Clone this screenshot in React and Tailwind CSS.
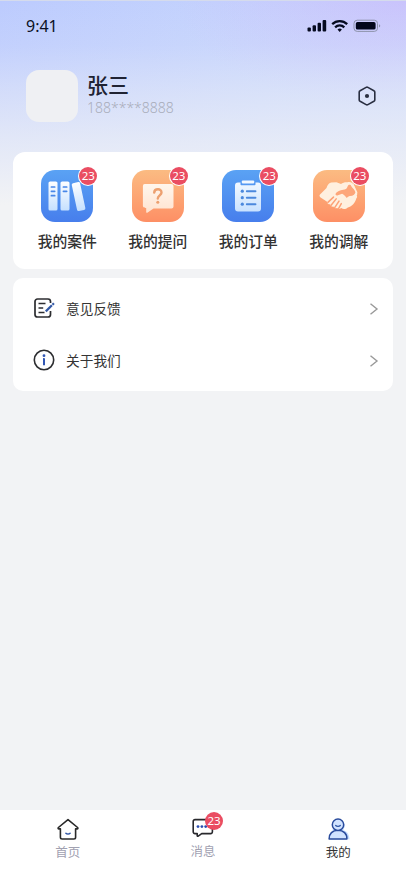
import React from 'react';

function Badge({ className }) {
  return (
    <span
      className={`absolute flex h-[18px] w-[18px] items-center justify-center rounded-full bg-[#ea4d62] pb-[1px] font-['Noto_Sans'] text-[11.5px] leading-none text-white ${className}`}
    >
      23
    </span>
  );
}

function StatusIcons() {
  return (
    <svg className="h-[14px] w-[74px]" viewBox="0 0 74 14" fill="none">
      <g fill="#060b20">
        <rect x="0.5" y="8.5" width="3.4" height="4" rx="1" />
        <rect x="5.6" y="6.3" width="3.4" height="6.2" rx="1" />
        <rect x="10.6" y="3.8" width="3.4" height="8.7" rx="1" />
        <rect x="15.6" y="1" width="3.6" height="11.5" rx="1" />
      </g>
      <g stroke="#060b20" strokeWidth="2.3">
        <path d="M25.2 5.2a10.8 10.8 0 0 1 15 0" />
        <path d="M28.1 8.3a6.7 6.7 0 0 1 9.2 0" />
      </g>
      <path d="M30.5 10.5a3.2 3.2 0 0 1 4.400 0l-2.200 2.400z" fill="#060b20" />
      <rect x="47" y="1.200" width="23.500" height="11.200" rx="3.200" stroke="#8d93ab" />
      <rect x="48.800" y="3" width="19.800" height="7.600" rx="1.700" fill="#03071a" />
      <path d="M72 5.200c1.700.6 1.700 2.600 0 3.200z" fill="#8d93ab" />
    </svg>
  );
}

function SettingsIcon() {
  return (
    <svg className="h-5 w-5" viewBox="0 0 20 20" fill="none">
      <path
        d="M9.1 1.400a1.800 1.800 0 0 1 1.800 0l6 3.300a1.600 1.600 0 0 1 .9 1.400v7.800a1.600 1.600 0 0 1-.9 1.400l-6 3.300a1.800 1.800 0 0 1-1.800 0l-6-3.300a1.600 1.600 0 0 1-.9-1.400V6.100a1.600 1.600 0 0 1 .9-1.400z"
        stroke="#292e40"
        strokeWidth="1.600"
      />
      <circle cx="10" cy="10" r="2.100" fill="#292e40" />
    </svg>
  );
}

function BooksIcon() {
  return (
    <svg className="h-[52px] w-[52px]" viewBox="0 0 52 52" fill="none">
      <defs>
        <linearGradient id="books" x1="0" y1="11" x2="0" y2="41" gradientUnits="userSpaceOnUse">
          <stop stopColor="#fff" />
          <stop offset="1" stopColor="#c5e0ff" />
        </linearGradient>
      </defs>
      <rect x="7.500" y="11.500" width="9" height="29" rx="1.600" fill="url(#books)" />
      <rect x="19.500" y="11.500" width="9" height="29" rx="1.600" fill="url(#books)" />
      <rect x="33.300" y="12.300" width="8.500" height="28.500" rx="1.600" transform="rotate(-12 37.500 26.500)" fill="url(#books)" />
      <path d="M10.400 17h3.300M10.400 21.300h3.300M10.400 25.700h3.300M22.400 17h3.300M22.400 21.300h3.300" stroke="#4887e9" strokeWidth="1.700" strokeLinecap="round" />
    </svg>
  );
}

function QuestionIcon() {
  return (
    <svg className="h-[52px] w-[52px]" viewBox="0 0 52 52" fill="none">
      <defs>
        <linearGradient id="bubble" x1="0" y1="14" x2="0" y2="43" gradientUnits="userSpaceOnUse">
          <stop stopColor="#fff6ec" />
          <stop offset="1" stopColor="#ffe3d0" />
        </linearGradient>
      </defs>
      <path
        d="M12.700 14h26.800a2 2 0 0 1 2 2v20.500a2 2 0 0 1-2 2H21.500l-5.800 4c-.9.600-1.500.300-1.500-.600v-3.600c0-.7-3.300-.400-3.300-2.300V16a2 2 0 0 1 1.800-2z"
        fill="url(#bubble)"
      />
      <path d="M22.200 22.600c.3-4.500 7.500-4.400 7.300 0-.1 2.700-3.700 2.900-3.700 5.900" stroke="#eda06f" strokeWidth="2.400" strokeLinecap="round" />
      <circle cx="25.800" cy="32.300" r="1.500" fill="#eda06f" />
    </svg>
  );
}

function OrderIcon() {
  return (
    <svg className="h-[52px] w-[52px]" viewBox="0 0 52 52" fill="none">
      <defs>
        <linearGradient id="order" x1="0" y1="10" x2="0" y2="42" gradientUnits="userSpaceOnUse">
          <stop stopColor="#f5faff" />
          <stop offset="1" stopColor="#c8e1ff" />
        </linearGradient>
      </defs>
      <path
        d="M16 12.500h2.500v1.700c0 .7.400 1.100 1.100 1.100h12.800c.7 0 1.100-.4 1.100-1.100v-1.700H36a3 3 0 0 1 3 3v23a3 3 0 0 1-3 3H16a3 3 0 0 1-3-3v-23a3 3 0 0 1 3-3z"
        fill="url(#order)"
      />
      <rect x="19.800" y="10.500" width="12.400" height="3" rx="1" fill="#f2f8ff" />
      <path d="M24.800 21.200h8.700M24.800 27.700h8.700M24.800 34.200h8.700" stroke="#4b88dd" strokeWidth="1.900" strokeLinecap="round" />
      <g fill="#4b88dd">
        <circle cx="20.300" cy="21.200" r="1.600" />
        <circle cx="20.300" cy="27.700" r="1.600" />
        <circle cx="20.300" cy="34.200" r="1.600" />
      </g>
    </svg>
  );
}

function HandshakeIcon() {
  return (
    <svg className="h-[52px] w-[52px]" viewBox="0 0 52 52" fill="none">
      <path
        d="M7 24.500 13.500 18c1-2.800 2-4.700 4.600-5.500l5.400-.3 4.500 1.700c2-1.400 4.500-2 6.500-1.600 2.700-.8 5 .3 6 2.400l3.600 8.200c.4 1 .1 1.800-.4 2.500.7 1 .4 2-.3 2.900-1.400 4.600-4.200 8.200-8.600 9.100-2 1.900-4.500 2.100-6.500.7-1.400 1.300-3 .9-4.200-.2-1.700.7-3 .1-3.700-1.300-1.900.2-2.900-.8-3.300-2.300-1.800 0-2.900-1-3-2.600L7.600 27.500c-1.100-.8-1.500-2-.6-3z"
        fill="#fff0df"
      />
      <path
        d="M36.300 14.500c-1 .5-1.600 1.300-1.900 2.600-.7 1.900-1.900 2.500-4.200 2.600-3.400.4-5.900 1.800-7.200 3.300-1.200 1.500.1 2.900 2 2.200l4.100-1.500c1.700 1 3.300 2.400 4.700 4.400 1.200-1.700 2.600-2.600 5-2.700 2.900-.1 4.700-1.900 3.800-4.300z"
        fill="#fda67a"
      />
      <path d="m36.800 15.200 3.600 7.400c.4 1-.2 1.900-1.300 2.200l-3.700.7" stroke="#fda67a" strokeWidth="1.500" />
      <path d="m14.900 32.400 5.600-5.300m-2.400 8.200 5.100-6.400m-1.500 8.700 4.300-6.500m-.6 7.800 2.900-5.300" stroke="#fda176" strokeWidth="1.500" strokeLinecap="round" />
      <path d="m39.600 14.200 3.900 8.200-1.600 2.700" stroke="#fff0df" strokeWidth="1.700" />
    </svg>
  );
}

function FeedbackIcon() {
  return (
    <svg className="h-[22px] w-[22px]" viewBox="0 0 22 22" fill="none">
      <path d="M17.500 6V4.500a2.500 2.500 0 0 0-2.500-2.500H4.500A2.500 2.500 0 0 0 2 4.500v13A2.500 2.500 0 0 0 4.500 20H15a2.500 2.500 0 0 0 2.500-2.500V14" stroke="#2c2d30" strokeWidth="1.700" />
      <path d="M5.500 6.500h7M5.500 11h4.700M5.500 15.500h6" stroke="#2c2d30" strokeWidth="1.600" />
      <path d="m12.800 14.400 6.100-6.100" stroke="#3157a5" strokeWidth="2.200" />
      <path d="m19.500 7.700 1.400-1.400" stroke="#3157a5" strokeWidth="2.200" />
    </svg>
  );
}

function AboutIcon() {
  return (
    <svg className="h-[22px] w-[22px]" viewBox="0 0 22 22" fill="none">
      <circle cx="11" cy="11" r="9.700" stroke="#2c2d30" strokeWidth="1.600" />
      <circle cx="11" cy="6.700" r="1.400" fill="#3157b5" />
      <path d="M11 9.300v6.700" stroke="#3157b5" strokeWidth="2" />
      <path d="M10 9.800h1M10 15.600h2" stroke="#3157b5" strokeWidth="1.200" />
    </svg>
  );
}

function HomeIcon() {
  return (
    <svg className="h-6 w-6" viewBox="0 0 24 24" fill="none">
      <path d="m12 2.600 9.600 7.900c.6.500.3 1.400-.5 1.400h-1.500v8.400c0 1-.7 1.700-1.700 1.700H6.100c-1 0-1.700-.7-1.700-1.700v-8.400H2.900c-.8 0-1.100-.9-.5-1.400z" stroke="#292929" strokeWidth="1.600" strokeLinejoin="round" />
      <path d="M9.900 16.200c.9 1 3.300 1 4.200 0" stroke="#3157a5" strokeWidth="1.500" strokeLinecap="round" />
    </svg>
  );
}

function MessageIcon() {
  return (
    <svg className="h-6 w-6" viewBox="0 0 24 24" fill="none">
      <path d="M21.400 12v2.800a1.800 1.800 0 0 1-1.800 1.800h-8.900l-3.500 2.500c-.5.400-1 .2-1-.4v-2.100H4A1.800 1.800 0 0 1 2.200 14.800V4.400A1.800 1.800 0 0 1 4 2.600h15.400" stroke="#29292d" strokeWidth="1.600" strokeLinejoin="round" />
      <g fill="#2a4bb0">
        <circle cx="7" cy="9.600" r="1.400" />
        <circle cx="10.900" cy="9.600" r="1.400" />
        <circle cx="14.700" cy="9.600" r="1.400" />
      </g>
    </svg>
  );
}

function ProfileIcon() {
  return (
    <svg className="h-6 w-6" viewBox="0 0 24 24" fill="none">
      <path d="M8 4c4-3.400 11.500-.3 10.800 5.500l-1.500 3.800c4.400.7 6 5.200 6.200 9H5z" fill="#c6ddff" />
      <path d="M3.100 21.900c-.2-5.200 3.500-8.700 8.900-8.700s9.200 3.500 8.900 8.700z" fill="#d1e3ff" stroke="#294b9c" strokeWidth="1.500" strokeLinejoin="round" />
      <circle cx="12" cy="7.800" r="5.700" fill="#d1e3ff" stroke="#294b9c" strokeWidth="1.500" />
      <path d="M9.700 8.500c1 1.200 3.600 1.200 4.600 0" stroke="#3157a5" strokeWidth="1.300" strokeLinecap="round" />
    </svg>
  );
}

const blue = 'bg-linear-to-b from-[#5aa2f4] to-[#477eec]';
const orange = 'bg-linear-to-b from-[#fbbb82] to-[#fd8f65]';

const services = [
  { label: '我的案件', tone: blue, Icon: BooksIcon },
  { label: '我的提问', tone: orange, Icon: QuestionIcon },
  { label: '我的订单', tone: blue, Icon: OrderIcon },
  { label: '我的调解', tone: orange, Icon: HandshakeIcon },
];

const links = [
  { label: '意见反馈', Icon: FeedbackIcon },
  { label: '关于我们', Icon: AboutIcon },
];

export default function App() {
  return (
    <div className="flex h-[883px] w-full flex-col overflow-hidden bg-[#f2f3f5] bg-[linear-gradient(180deg,rgba(242,243,245,0)_0px,rgba(242,243,245,0.12)_45px,rgba(242,243,245,0.42)_90px,rgba(242,243,245,0.7)_140px,#f2f3f5_205px),radial-gradient(ellipse_230px_110px_at_100%_0%,#c9c3fc_0%,rgba(201,195,252,0)_100%),linear-gradient(100deg,#bccbfe_0%,#c5d4fd_50%,#ccd8fc_100%)] font-['Noto_Sans_CJK_SC',sans-serif]">
      <div className="h-px shrink-0 bg-[#d5dbec]" />
      <header className="flex h-[49px] shrink-0 items-center justify-between pr-[25px] pl-[26px]">
        <span className="font-['Noto_Sans'] text-[16px] leading-5 text-[#0b1024]">9:41</span>
        <StatusIcons />
      </header>

      <section className="mt-5 flex h-[52px] shrink-0 items-center pr-[29px] pl-[26px]">
        <div className="h-[52px] w-[52px] rounded-[13px] bg-[#eff0f3]" />
        <div className="ml-[9px] flex flex-1 flex-col pb-[3px]">
          <span className="text-[21px] leading-[27px] font-medium text-[#202333]">张三</span>
          <span className="font-['Noto_Sans'] text-[14px] leading-5 font-light text-[#a9adba]">188****8888</span>
        </div>
        <SettingsIcon />
      </section>

      <main className="flex flex-1 flex-col gap-[9px] px-[13px] pt-[30px]">
        <section className="grid h-[117px] grid-cols-4 rounded-xl bg-white px-[9px] pt-[18px]">
          {services.map(({ label, tone, Icon }) => (
            <div key={label} className="flex flex-col items-center">
              <div className={`relative h-[52px] w-[52px] rounded-[14px] ${tone}`}>
                <Icon />
                <Badge className="-top-[3px] -right-[4px] ring-1 ring-white" />
              </div>
              <span className="mt-2 text-[14.8px] leading-[22px] font-medium text-[#333]">{label}</span>
            </div>
          ))}
        </section>

        <section className="flex h-[113px] flex-col rounded-[10px] bg-white pt-1 pr-[13px] pl-5">
          {links.map(({ label, Icon }) => (
            <div key={label} className="flex h-[52px] items-center">
              <Icon />
              <span className="ml-[11px] flex-1 text-[13.7px] leading-5 text-[#343434]">{label}</span>
              <svg className="mt-px h-3 w-3" viewBox="0 0 12 12" fill="none">
                <path d="m2.500 0.700 6.500 5.300-6.500 5.300" stroke="#999" strokeWidth="1.400" />
              </svg>
            </div>
          ))}
        </section>
      </main>

      <nav className="grid h-[73px] shrink-0 grid-cols-3 bg-white pt-[7px]">
        <div className="flex flex-col items-center">
          <HomeIcon />
          <span className="mt-[2px] text-[12.5px] leading-[18px] text-[#a1a1b1]">首页</span>
        </div>
        <div className="flex flex-col items-center">
          <div className="relative">
            <MessageIcon />
            <Badge className="-top-[5px] -right-[8px]" />
          </div>
          <span className="mt-[1px] text-[12.5px] leading-[18px] text-[#a1a1b1]">消息</span>
        </div>
        <div className="flex flex-col items-center">
          <ProfileIcon />
          <span className="mt-[2px] text-[12.5px] leading-[18px] text-[#333]">我的</span>
        </div>
      </nav>
    </div>
  );
}
